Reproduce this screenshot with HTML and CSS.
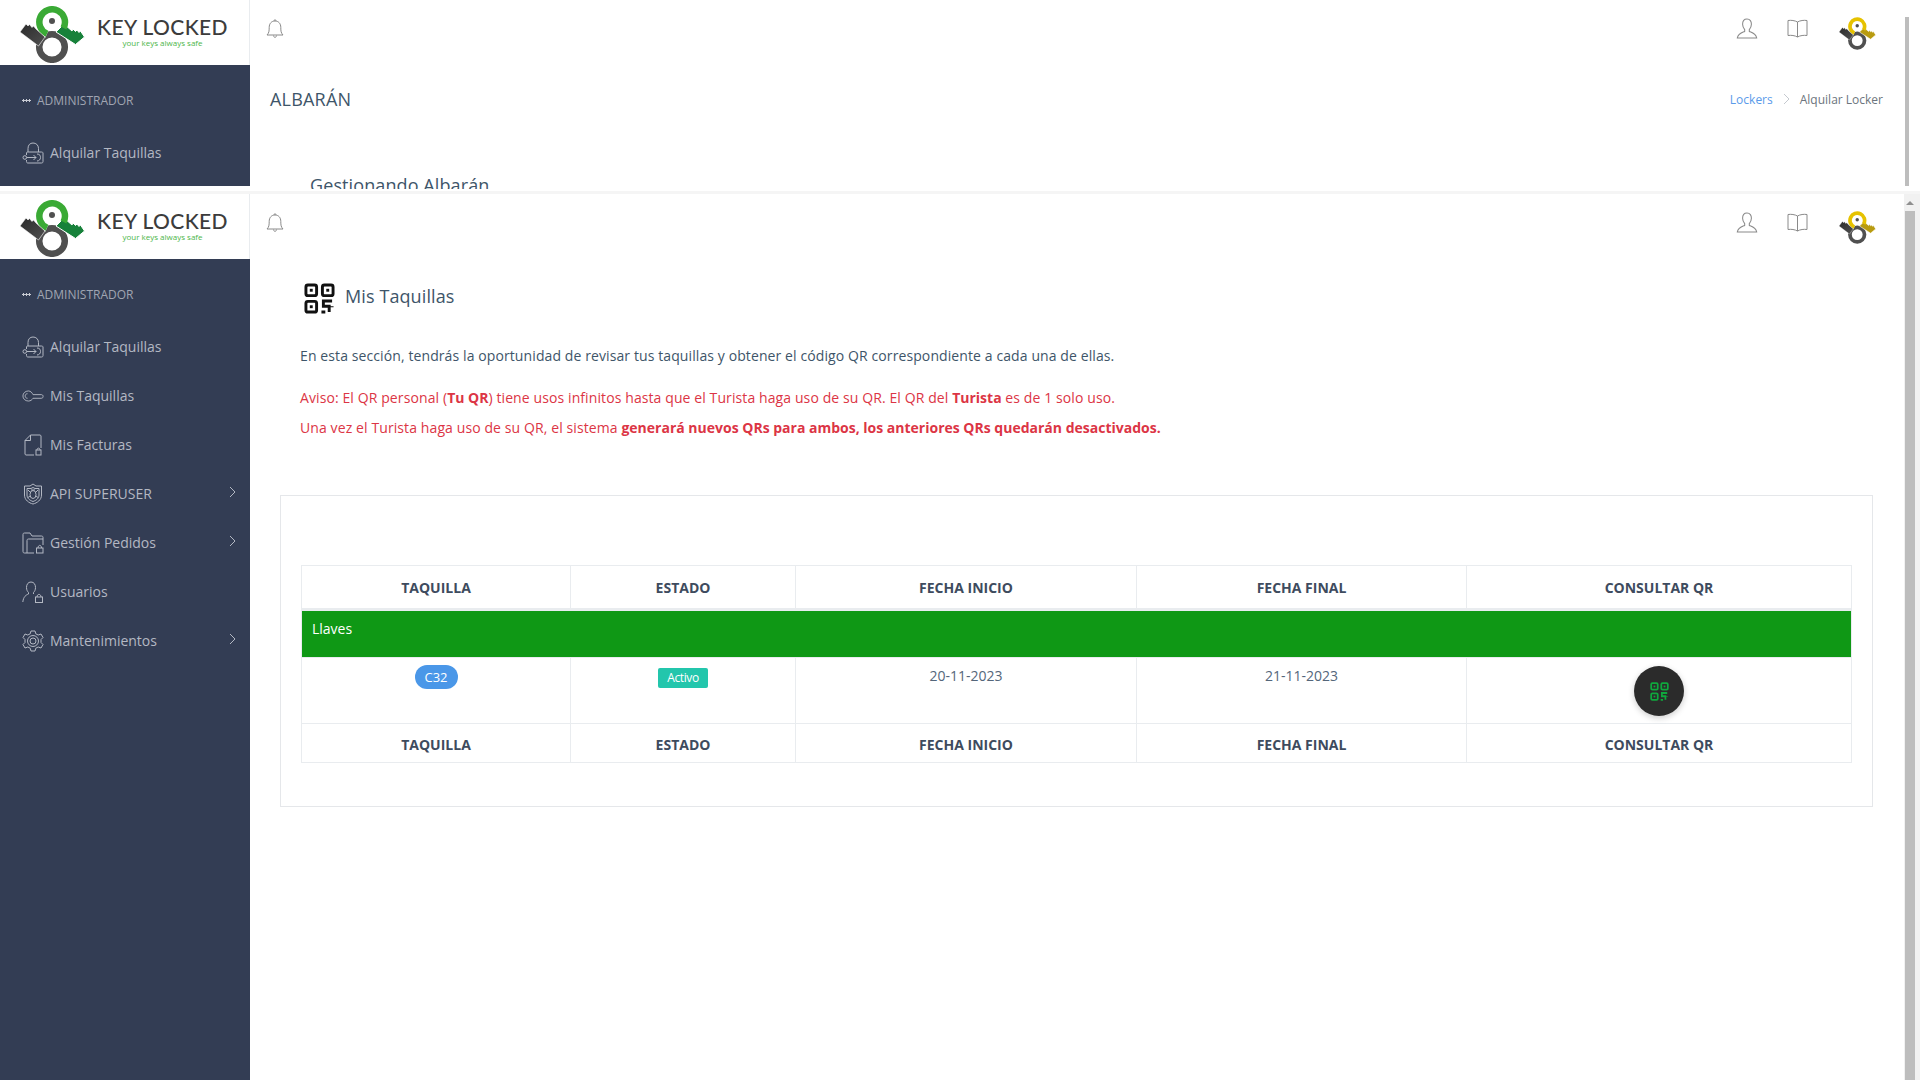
FILE: index.html
```html
<!DOCTYPE html>
<html lang="es">
<head>
    <meta charset="UTF-8">
    <meta name="viewport" content="width=device-width, initial-scale=1.0">
    <title>Key Locked - Mis Taquillas</title>
    <link rel="stylesheet" href="styles.css">
</head>
<body>
    <svg class="sprites" width="0" height="0">
        <defs>
            <linearGradient id="gradDark" x1="0" y1="0" x2="1" y2="1">
                <stop offset="0" stop-color="#2b2b2b"/>
                <stop offset="1" stop-color="#505050"/>
            </linearGradient>
            <symbol id="mark" viewBox="20 6 65 57">
                <circle cx="52" cy="47" r="12.800" fill="none" stroke="#505050" stroke-width="6.500"/>
                <path d="M47 33.800 A12.800 12.800 0 1 1 63.500 28" fill="none" stroke="#ffffff" stroke-width="8.500"/>
                <path d="M64 24 L72 31 L73 29 L75.500 31.500 L77 30 L79 32.500 L80.500 31 L84.500 37 L75.500 44.500 L56 32 Z" fill="var(--key-dark)" stroke="#ffffff" stroke-width="1"/>
                <path d="M47 33.800 A12.800 12.800 0 1 1 63.500 28" fill="none" stroke="var(--key)" stroke-width="6.500"/>
                <path d="M20 32 L26 24 L28 26 L29.500 24.500 L32 27.500 L33.500 26 L36 29 L45 37 L38.500 46 Z" fill="url(#gradDark)" stroke="#ffffff" stroke-width="0.600"/>
                <circle cx="52" cy="21" r="3" fill="#505050"/>
            </symbol>
            <symbol id="qr" viewBox="0 0 32 32">
                <g fill="none" stroke="currentColor" stroke-width="3">
                    <rect x="2" y="2" width="11" height="11" rx="2"/>
                    <rect x="19" y="2" width="11" height="11" rx="2"/>
                    <rect x="2" y="19" width="11" height="11" rx="2"/>
                    <path d="M29 18.500 H20 V24 H26 V30 M18 30 H22 M29 24 V25"/>
                </g>
                <g fill="currentColor">
                    <rect x="6" y="6" width="3" height="3"/>
                    <rect x="23" y="6" width="3" height="3"/>
                    <rect x="6" y="23" width="3" height="3"/>
                </g>
            </symbol>
            <symbol id="bell" viewBox="0 0 18 20">
                <path d="M1 16 C3 14 3.200 12 3.200 8.500 C3.200 4.500 5.500 2 9 2 C12.500 2 14.800 4.500 14.800 8.500 C14.800 12 15 14 17 16 Z M8 1.800 A1 1 0 0 1 10 1.800 M7.500 16.500 C7.800 19 10.200 19 10.500 16.500"/>
            </symbol>
            <symbol id="user" viewBox="0 0 20 20">
                <path d="M10 1 C7 1 5.800 3.200 5.800 6 C5.800 8.500 7 10 7.800 11 L7.800 12.800 C5 14 1.500 15 0.800 19 H19.200 C18.500 15 15 14 12.200 12.800 L12.200 11 C13 10 14.200 8.500 14.200 6 C14.200 3.200 13 1 10 1 Z"/>
            </symbol>
            <symbol id="book" viewBox="0 0 21 19">
                <path d="M10.500 3 C8 1.500 4 1 1 1.500 V16.500 C4 16 8 16.500 10.500 18 C13 16.500 17 16 20 16.500 V1.500 C17 1 13 1.500 10.500 3 Z M10.500 3 V18"/>
            </symbol>
            <symbol id="i-rent" viewBox="0 0 22 22">
                <path d="M6 10 V6.500 C6 3 8 1 11 1 C14 1 16.500 3 16.500 6.500 V10 M4.500 13 V11 C4.500 10.300 5 10 5.500 10 H19.500 C20.500 10 21 10.500 21 11 V19.500 C21 20.500 20.500 21 19.500 21 H6 C5 21 4.500 20.500 4.500 19.500 V18"/>
                <circle cx="2.800" cy="15.500" r="1.800"/>
                <path d="M4.600 15.500 H14 M11.500 13 L14 15.500 L11.500 18 M15 12 C18 12 18.500 14 18.500 15.500 C18.500 17.500 17 19 15 19"/>
            </symbol>
            <symbol id="i-key" viewBox="0 0 24 14">
                <path d="M7 1.500 C3.500 1.500 1 4 1 7 C1 10 3.500 12.500 7 12.500 C9.500 12.500 11 11 12 9.500 H21 C22.500 9.500 23 8.500 23 7.500 C23 6 22 5.500 21 5.500 H12 C11 3.500 9.500 1.500 7 1.500 Z"/>
                <path d="M6 4.500 C4 4.500 3.500 6 3.500 7 C3.500 8 4 9.500 6 9.500"/>
            </symbol>
            <symbol id="i-file" viewBox="0 0 18 22">
                <path d="M10 21 H2 C1.500 21 1 20.500 1 20 V6.500 L6.500 1 H16 C16.500 1 17 1.500 17 2 V14 M1 6.500 H6.500 V1"/>
                <rect x="12" y="16" width="5" height="5"/>
                <path d="M13 16 C13 13.500 16 13.500 16 16"/>
            </symbol>
            <symbol id="i-shield" viewBox="0 0 20 22">
                <path d="M10 1 L13 3 L18.500 3 V12 C18.500 17 14 20 10 21 C6 20 1.500 17 1.500 12 V3 L7 3 Z"/>
                <path d="M10 4.500 L12 5.500 H16 V12 C16 15.500 13 17.500 10 18.500 C7 17.500 4 15.500 4 12 V5.500 H8 Z"/>
                <ellipse cx="10" cy="11.500" rx="3" ry="4"/>
                <path d="M7 9 L5 7 M13 9 L15 7 M7 13 L5 14.500 M13 13 L15 14.500 M8 7 H12"/>
            </symbol>
            <symbol id="i-folder" viewBox="0 0 22 22">
                <path d="M12 21 H2.500 C1.500 21 1 20.500 1 19.500 V2.500 C1 1.500 1.500 1 2.500 1 H8 L10 4 H19.500 C20.500 4 21 4.500 21 5.500 V13 M5 21 V8.500 C5 7.500 5.500 7 6.500 7 H21"/>
                <rect x="14.500" y="16" width="6.500" height="5"/>
                <path d="M16 16 C16 12.500 19.500 12.500 19.500 16"/>
            </symbol>
            <symbol id="i-userlock" viewBox="0 0 22 22">
                <path d="M9 1 C6 1 4.500 3.500 4.500 6.500 C4.500 9 5.500 10.500 6.500 11.500 V13 C4 14 1.500 15.500 0.800 21 M9 1 C12 1 13.500 3.500 13.500 6.500 C13.500 9 12.500 10.500 11.500 11.500 V13"/>
                <rect x="13.500" y="16" width="7" height="5.500"/>
                <path d="M15 16 C15 12.500 19 12.500 19 16"/>
            </symbol>
            <symbol id="i-gear" viewBox="0 0 22 22">
                <path d="M9 1 H13 L13.800 3.800 L16.200 5 L19 4 L21 7.500 L19 9.500 V12.500 L21 14.500 L19 18 L16.200 17 L13.800 18.200 L13 21 H9 L8.200 18.200 L5.800 17 L3 18 L1 14.500 L3 12.500 V9.500 L1 7.500 L3 4 L5.800 5 L8.200 3.800 Z"/>
                <circle cx="11" cy="11" r="5.500"/>
                <circle cx="11" cy="11" r="3"/>
            </symbol>
            <symbol id="chev" viewBox="0 0 7 12">
                <path d="M1 1 L6 6 L1 11"/>
            </symbol>
        </defs>
    </svg>

    <div class="frame frame-top">
        <aside class="sidebar">
            <div class="brand">
                <svg class="mark"><use href="#mark"/></svg>
                <div class="brand-text">
                    <div class="brand-name">KEY LOCKED</div>
                    <div class="brand-tag">your keys always safe</div>
                </div>
            </div>
            <div class="menu-label"><span class="dots"></span>ADMINISTRADOR</div>
            <a class="menu-item"><svg class="menu-icon"><use href="#i-rent"/></svg>Alquilar Taquillas</a>
        </aside>
        <main class="main">
            <header class="topbar">
                <svg class="top-icon bell"><use href="#bell"/></svg>
                <div class="top-right">
                    <svg class="top-icon user"><use href="#user"/></svg>
                    <svg class="top-icon book"><use href="#book"/></svg>
                    <svg class="mark mark-small"><use href="#mark"/></svg>
                </div>
            </header>
            <div class="page-title">
                <h1>ALBARÁN</h1>
                <div class="crumbs">
                    <a>Lockers</a>
                    <svg class="crumb-sep"><use href="#chev"/></svg>
                    <span>Alquilar Locker</span>
                </div>
            </div>
            <h2 class="cut-title">Gestionando Albarán</h2>
        </main>
        <div class="scroll scroll-top"><div class="thumb"></div></div>
    </div>

    <div class="frame-sep"></div>

    <div class="frame frame-main">
        <aside class="sidebar">
            <div class="brand">
                <svg class="mark"><use href="#mark"/></svg>
                <div class="brand-text">
                    <div class="brand-name">KEY LOCKED</div>
                    <div class="brand-tag">your keys always safe</div>
                </div>
            </div>
            <div class="menu-label"><span class="dots"></span>ADMINISTRADOR</div>
            <a class="menu-item"><svg class="menu-icon"><use href="#i-rent"/></svg>Alquilar Taquillas</a>
            <a class="menu-item"><svg class="menu-icon"><use href="#i-key"/></svg>Mis Taquillas</a>
            <a class="menu-item"><svg class="menu-icon"><use href="#i-file"/></svg>Mis Facturas</a>
            <a class="menu-item"><svg class="menu-icon"><use href="#i-shield"/></svg>API SUPERUSER<svg class="menu-arrow"><use href="#chev"/></svg></a>
            <a class="menu-item"><svg class="menu-icon"><use href="#i-folder"/></svg>Gestión Pedidos<svg class="menu-arrow"><use href="#chev"/></svg></a>
            <a class="menu-item"><svg class="menu-icon"><use href="#i-userlock"/></svg>Usuarios</a>
            <a class="menu-item"><svg class="menu-icon"><use href="#i-gear"/></svg>Mantenimientos<svg class="menu-arrow"><use href="#chev"/></svg></a>
        </aside>
        <main class="main">
            <header class="topbar">
                <svg class="top-icon bell"><use href="#bell"/></svg>
                <div class="top-right">
                    <svg class="top-icon user"><use href="#user"/></svg>
                    <svg class="top-icon book"><use href="#book"/></svg>
                    <svg class="mark mark-small"><use href="#mark"/></svg>
                </div>
            </header>
            <section class="content">
                <div class="intro">
                    <div class="section-title">
                        <svg class="qr-big"><use href="#qr"/></svg>
                        <span>Mis Taquillas</span>
                    </div>
                    <p class="lead">En esta sección, tendrás la oportunidad de revisar tus taquillas y obtener el código QR correspondiente a cada una de ellas.</p>
                    <p class="warn">Aviso: El QR personal (<b>Tu QR</b>) tiene usos infinitos hasta que el Turista haga uso de su QR. El QR del <b>Turista</b> es de 1 solo uso.</p>
                    <p class="warn">Una vez el Turista haga uso de su QR, el sistema <b>generará nuevos QRs para ambos, los anteriores QRs quedarán desactivados.</b></p>
                </div>
                <div class="card">
                    <table class="lockers">
                        <colgroup>
                            <col class="col-1"><col class="col-2"><col class="col-3"><col class="col-4"><col class="col-5">
                        </colgroup>
                        <thead>
                            <tr><th>TAQUILLA</th><th>ESTADO</th><th>FECHA INICIO</th><th>FECHA FINAL</th><th>CONSULTAR QR</th></tr>
                        </thead>
                        <tbody>
                            <tr class="group"><td colspan="5">Llaves</td></tr>
                            <tr>
                                <td><span class="pill">C32</span></td>
                                <td><span class="status">Activo</span></td>
                                <td>20-11-2023</td>
                                <td>21-11-2023</td>
                                <td><button class="qr-btn"><svg class="qr-small"><use href="#qr"/></svg></button></td>
                            </tr>
                        </tbody>
                        <tfoot>
                            <tr><th>TAQUILLA</th><th>ESTADO</th><th>FECHA INICIO</th><th>FECHA FINAL</th><th>CONSULTAR QR</th></tr>
                        </tfoot>
                    </table>
                </div>
            </section>
        </main>
        <div class="scroll scroll-main">
            <div class="scroll-up"></div>
            <div class="thumb"></div>
        </div>
    </div>
</body>
</html>
```

FILE: styles.css
```css
* {
    box-sizing: border-box;
}
html, body {
    height: 100%;
}
body {
    font-family: "Open Sans", sans-serif;
    font-size: 14px;
    background-color: #ffffff;
    color: #3e5569;
    margin: 0;
    overflow: hidden;
}
.sprites {
    display: block;
    height: 0;
}
.frame {
    display: flex;
    overflow: hidden;
}
.frame-top {
    height: 189px;
    margin-bottom: 2px;
}
.frame-main {
    height: 886px;
}
.frame-sep {
    height: 3px;
    background-color: #f5f5f5;
}
.sidebar {
    width: 250px;
    flex-shrink: 0;
    background-color: #333d54;
    color: #b3b8c3;
}
.frame-top .sidebar {
    height: 186px;
}
.brand {
    height: 65px;
    background-color: #ffffff;
    border-right: 1px solid #e9ecef;
    display: flex;
    align-items: center;
    padding-left: 20px;
    --key: #3aaa35;
    --key-dark: #17813a;
}
.brand .mark {
    margin-top: 3px;
}
.mark {
    width: 65px;
    height: 57px;
    flex-shrink: 0;
}
.brand-text {
    margin-left: 12px;
    text-align: center;
}
.brand-name {
    font-family: Lato, sans-serif;
    font-size: 21px;
    line-height: 24px;
    color: #3c3c3c;
    letter-spacing: 0.4px;
    font-weight: 500;
}
.brand-tag {
    font-size: 8px;
    line-height: 11px;
    margin: -2px 0 2px;
    color: #4cb648;
}
.menu-label {
    height: 64px;
    padding: 6px 0 0 22px;
    display: flex;
    align-items: center;
    font-size: 12px;
    color: #a0a5b2;
}
.dots {
    width: 9px;
    height: 3px;
    margin-right: 6px;
    background-image: radial-gradient(circle, #c9ccd4 1.2px, transparent 1.3px);
    background-size: 3px 3px;
}
.menu-item {
    height: 49px;
    display: flex;
    align-items: center;
    padding-left: 22px;
    position: relative;
    font-size: 14px;
    top: -1px;
}
.menu-icon {
    width: 22px;
    height: 22px;
    margin-right: 6px;
    flex-shrink: 0;
    fill: none;
    stroke: #b3b8c3;
    stroke-width: 1;
}
.menu-arrow {
    position: absolute;
    right: 14px;
    top: 17px;
    width: 7px;
    height: 12px;
    fill: none;
    stroke: #b3b8c3;
    stroke-width: 1;
}
.main {
    flex: 1;
    min-width: 0;
}
.topbar {
    height: 65px;
    display: flex;
    align-items: flex-start;
    justify-content: space-between;
    padding-left: 16px;
}
.top-icon {
    fill: none;
    stroke: #8a8a8a;
    stroke-width: 1;
}
.bell {
    width: 18px;
    height: 20px;
    margin-top: 19px;
}
.top-right {
    display: flex;
    align-items: flex-start;
    padding-right: 28px;
    --key: #e6c200;
    --key-dark: #b89b10;
}
.user {
    width: 22px;
    height: 21px;
    margin-top: 18px;
}
.book {
    width: 21px;
    height: 19px;
    margin-top: 19px;
    margin-left: 29px;
}
.mark-small {
    width: 37px;
    height: 33px;
    margin-top: 17px;
    margin-left: 31px;
}
.page-title {
    height: 68px;
    display: flex;
    align-items: center;
    justify-content: space-between;
    padding: 0 21px 0 20px;
}
.page-title h1 {
    margin: 0;
    font-size: 18px;
    font-weight: 400;
    letter-spacing: 0.2px;
    color: #3e5569;
}
.crumbs {
    display: flex;
    align-items: center;
    font-size: 12px;
    color: #6c757d;
}
.crumbs a {
    color: #5a9bea;
}
.crumb-sep {
    width: 7px;
    height: 12px;
    margin: 0 10px;
    fill: none;
    stroke: #c5c9cf;
    stroke-width: 1;
}
.cut-title {
    margin: 40px 0 0;
    padding-left: 60px;
    font-size: 18px;
    font-weight: 400;
    letter-spacing: 0.1px;
    color: #3e5569;
}
.scroll {
    width: 16px;
    flex-shrink: 0;
}
.scroll-top {
    padding: 17px 11px 0 1px;
    height: 186px;
}
.scroll-top .thumb {
    height: 100%;
    background-color: #bdbdbd;
}
.scroll-main {
    background-color: #f1f1f1;
    padding-left: 1px;
    padding-right: 5px;
}
.scroll-up {
    height: 17px;
    display: flex;
    justify-content: center;
    padding-top: 7px;
}
.scroll-up::before {
    content: "";
    width: 0;
    height: 0;
    border-left: 4px solid transparent;
    border-right: 4px solid transparent;
    border-bottom: 4px solid #8f8f8f;
}
.scroll-main .thumb {
    height: 100%;
    background-color: #bdbdbd;
}
.content {
    padding: 24px 31px 0 30px;
}
.intro {
    padding-left: 20px;
}
.section-title {
    display: flex;
    align-items: center;
    height: 31px;
    margin-left: 4px;
    font-size: 18px;
    letter-spacing: 0.1px;
    margin-bottom: 31px;
}
.section-title span {
    margin-top: -6px;
}
.qr-big {
    width: 31px;
    height: 31px;
    margin-right: 10px;
    color: #111111;
}
.lead {
    margin: 0 0 21px;
    line-height: 21px;
    letter-spacing: 0.1px;
}
.warn {
    margin: 0;
    line-height: 30px;
    letter-spacing: 0.1px;
    color: #dc3545;
    position: relative;
    top: -4px;
}
.warn b {
    letter-spacing: 0;
}
.card {
    margin-top: 48px;
    border: 1px solid #e5e7ea;
    padding: 69px 20px 43px;
}
.lockers {
    width: 100%;
    table-layout: fixed;
    border-collapse: collapse;
    text-align: center;
}
.col-1 { width: 269px; }
.col-2 { width: 225px; }
.col-3 { width: 341px; }
.col-4 { width: 330px; }
.lockers th, .lockers td {
    border: 1px solid #e9ecef;
}
.lockers th {
    height: 39px;
    font-size: 14px;
    font-weight: 700;
    color: #3e4b5e;
}
.lockers tfoot th {
    padding-top: 4px;
}
.lockers thead th {
    height: 44px;
    border-bottom: 3px solid #e9ecef;
}
.lockers td {
    height: 66px;
    padding: 8px 10px 0;
    vertical-align: top;
    color: #54667a;
}
.lockers .group td {
    height: 48px;
    background-color: #0f9815;
    color: #ffffff;
    text-align: left;
    padding: 8px 10px;
}
.pill {
    display: inline-block;
    width: 43px;
    height: 24px;
    line-height: 24px;
    margin-top: -1px;
    border-radius: 12px;
    background-color: #4a97e8;
    color: #ffffff;
    font-size: 13px;
}
.status {
    display: inline-block;
    width: 50px;
    height: 20px;
    line-height: 20px;
    margin-top: 2px;
    border-radius: 2px;
    background-color: #23c6ac;
    color: #ffffff;
    font-size: 12px;
    letter-spacing: -0.4px;
}
.qr-btn {
    width: 50px;
    height: 50px;
    margin-top: 0;
    padding: 0;
    border: none;
    border-radius: 50%;
    background-color: #2b2b2b;
    box-shadow: 0 2px 6px rgba(0, 0, 0, 0.2);
    display: inline-flex;
    align-items: center;
    justify-content: center;
}
.qr-small {
    width: 19px;
    height: 19px;
    color: #0fa83d;
}
```
